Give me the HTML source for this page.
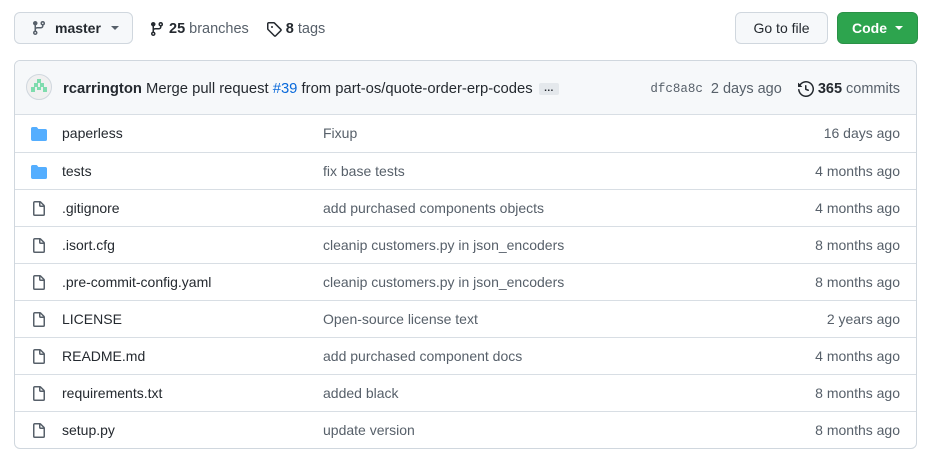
<!DOCTYPE html>
<html><head><meta charset="utf-8"><style>
*{box-sizing:border-box;margin:0;padding:0}
body{width:933px;height:461px;background:#fff;font-family:"Liberation Sans",Arial,sans-serif;font-size:14px;color:#24292f;position:relative;overflow:hidden}
.abs{position:absolute}
.btn{position:absolute;border:1px solid #d0d7de;border-radius:6px;background:#f6f8fa;height:32px;display:flex;align-items:center;font-weight:bold}
.caret{display:inline-block;width:0;height:0;border-left:4px solid transparent;border-right:4px solid transparent;border-top:4px solid currentColor;margin-left:8px}
.box{position:absolute;left:14px;top:60px;width:903px;height:389px;border:1px solid #d0d7de;border-radius:6px;overflow:hidden}
.hdr{height:54px;background:#f6f8fa;border-bottom:1px solid #d8dee4;position:relative}
.row{height:37px;border-top:1px solid #d8dee4;position:relative}
.row span{position:absolute;top:0;line-height:36px}
.n{left:47px}.m{left:308px;color:#57606a}.a{right:16px;color:#57606a}
.ic{position:absolute;left:16px;top:11px}
.muted{color:#57606a}
</style></head><body>
<div class="btn" style="left:14px;top:12px;width:119px;padding-left:16px">
<svg width="16" height="16" viewBox="0 0 16 16" fill="#57606a"><path d="M11.75 2.5a.75.75 0 100 1.5.75.75 0 000-1.5zm-2.25.75a2.25 2.25 0 113 2.122V6A2.5 2.5 0 0110 8.5H6a1 1 0 00-1 1v1.128a2.251 2.251 0 11-1.5 0V5.372a2.25 2.25 0 111.5 0v1.836A2.492 2.492 0 016 7h4a1 1 0 001-1v-.628A2.25 2.25 0 019.5 3.25zM4.25 12a.75.75 0 100 1.5.75.75 0 000-1.5zM3.5 3.25a.75.75 0 111.5 0 .75.75 0 01-1.5 0z"/></svg>
<span style="margin-left:8px">master</span><span class="caret" style="color:#57606a;margin-left:10px"></span></div>
<div class="abs" style="left:149px;top:21px;display:flex;align-items:center;font-size:14.5px">
<svg width="16" height="16" viewBox="0 0 16 16" fill="#24292f"><path d="M11.75 2.5a.75.75 0 100 1.5.75.75 0 000-1.5zm-2.25.75a2.25 2.25 0 113 2.122V6A2.5 2.5 0 0110 8.5H6a1 1 0 00-1 1v1.128a2.251 2.251 0 11-1.5 0V5.372a2.25 2.25 0 111.5 0v1.836A2.492 2.492 0 016 7h4a1 1 0 001-1v-.628A2.25 2.25 0 019.5 3.25zM4.25 12a.75.75 0 100 1.5.75.75 0 000-1.5zM3.5 3.25a.75.75 0 111.5 0 .75.75 0 01-1.5 0z"/></svg>
<b style="margin-left:4px">25</b><span class="muted" style="margin-left:4px">branches</span>
<svg style="margin-left:17px" width="16" height="16" viewBox="0 0 16 16" fill="#24292f" fill-rule="evenodd"><path d="M2.5 7.775V2.75a.25.25 0 01.25-.25h5.025a.25.25 0 01.177.073l6.25 6.25a.25.25 0 010 .354l-5.025 5.025a.25.25 0 01-.354 0l-6.25-6.25a.25.25 0 01-.073-.177zm-1.5 0V2.75C1 1.784 1.784 1 2.75 1h5.025c.464 0 .91.184 1.238.513l6.25 6.25a1.75 1.75 0 010 2.474l-5.026 5.026a1.75 1.75 0 01-2.474 0l-6.25-6.25A1.75 1.75 0 011 7.775zM6 5a1 1 0 100 2 1 1 0 000-2z"/></svg>
<b style="margin-left:4px">8</b><span class="muted" style="margin-left:4px">tags</span></div>
<div class="btn" style="left:735px;top:12px;width:93px;justify-content:center;font-weight:normal;color:#24292f">Go to file</div>
<div class="btn" style="left:837px;top:12px;width:81px;justify-content:center;background:#2da44e;border-color:#2a9147;color:#fff">Code<span class="caret"></span></div>
<div class="box">
<div class="hdr">
<svg class="abs" style="left:11px;top:13px" width="26" height="26" viewBox="0 0 26 26"><circle cx="13" cy="13" r="12.5" fill="#f0f0f0" stroke="#d0d7de"/><g fill="#7fdcae"><rect x="11" y="5" width="4" height="4"/><rect x="8" y="9" width="4" height="4"/><rect x="14" y="9" width="4" height="4"/><rect x="5" y="13" width="4" height="5"/><rect x="17" y="13" width="4" height="5"/><rect x="11" y="13" width="4" height="3"/></g></svg>
<div class="abs" style="left:48px;top:20px;white-space:nowrap;font-size:14.8px"><b>rcarrington</b> Merge pull request <span style="color:#0969da">#39</span> from part-os/quote-order-erp-codes <span style="display:inline-block;background:#e4e8ec;border-radius:2px;padding:0 5px;font-size:10px;line-height:12px;vertical-align:middle;font-weight:bold;margin-left:2px">…</span></div>
<div class="abs" style="right:16px;top:20px;white-space:nowrap;display:flex;align-items:center;font-size:14.5px"><span style="font-family:'Liberation Mono',monospace;font-size:12.5px;color:#57606a">dfc8a8c</span><span class="muted" style="margin-left:8px">2 days ago</span>
<svg style="margin-left:16px" width="16" height="16" viewBox="0 0 16 16" fill="#24292f"><path d="M1.643 3.143L.427 1.927A.25.25 0 000 2.104V5.750c0 .138.112.25.25.25h3.646a.25.25 0 00.177-.427L2.715 4.215a6.5 6.5 0 11-1.180 4.458.75.75 0 10-1.493.154 8.001 8.001 0 101.6-5.684zM7.75 4a.75.75 0 01.75.75v2.992l2.028.812a.75.75 0 01-.557 1.392l-2.5-1A.75.75 0 017 8.25v-3.5A.75.75 0 017.75 4z"/></svg>
<b style="margin-left:4px">365</b><span class="muted" style="margin-left:4px">commits</span></div>
</div>
<div id="rows"></div>
</div>
<script>
var d=[["d","paperless","Fixup","16 days ago"],["d","tests","fix base tests","4 months ago"],["f",".gitignore","add purchased components objects","4 months ago"],["f",".isort.cfg","cleanip customers.py in json_encoders","8 months ago"],["f",".pre-commit-config.yaml","cleanip customers.py in json_encoders","8 months ago"],["f","LICENSE","Open-source license text","2 years ago"],["f","README.md","add purchased component docs","4 months ago"],["f","requirements.txt","added black","8 months ago"],["f","setup.py","update version","8 months ago"]];
var h="";d.forEach(function(r,i){var ic=r[0]=="d"?'<svg class="ic" width="16" height="16" viewBox="0 0 16 16" fill="#54aeff"><path d="M1.75 1A1.75 1.75 0 000 2.75v10.5C0 14.216.784 15 1.75 15h12.5A1.75 1.75 0 0016 13.25v-8.5A1.75 1.75 0 0014.25 3H7.5a.25.25 0 01-.2-.1l-.9-1.2C6.07 1.26 5.55 1 5 1H1.75z"/></svg>':'<svg class="ic" width="16" height="16" viewBox="0 0 16 16" fill="#57606a"><path d="M3.75 1.5a.25.25 0 00-.25.25v11.5c0 .138.112.25.25.25h8.5a.25.25 0 00.25-.25V6H9.75A1.75 1.75 0 018 4.25V1.5H3.75zm5.75.56v2.19c0 .138.112.25.25.25h2.19L9.5 2.06zM2 1.75C2 .784 2.784 0 3.75 0h5.086c.464 0 .909.184 1.237.513l3.414 3.414c.329.328.513.773.513 1.237v8.086A1.75 1.75 0 0112.25 15h-8.5A1.75 1.75 0 012 13.25V1.75z"/></svg>';
h+='<div class="row"'+(i==0?' style="border-top:none"':'')+'>'+ic+'<span class="n">'+r[1]+'</span><span class="m">'+r[2]+'</span><span class="a">'+r[3]+'</span></div>';});
document.getElementById("rows").innerHTML=h;
</script>
</body></html>
